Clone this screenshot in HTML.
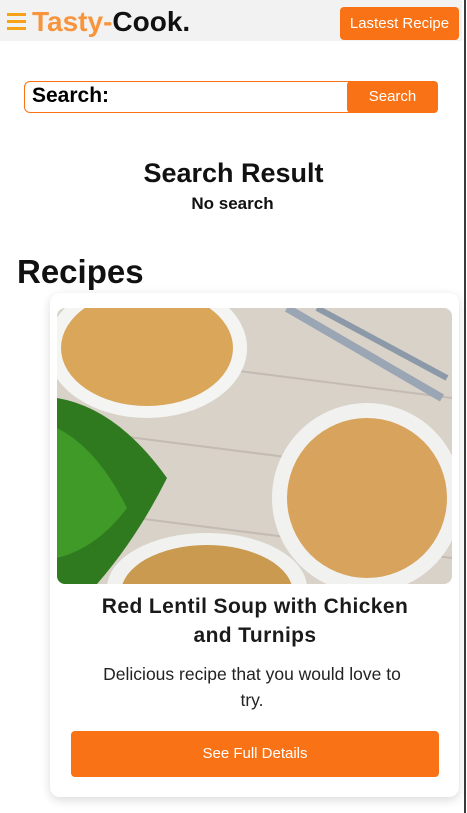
<!DOCTYPE html>
<html><head><style>
body{margin:0;width:467px;height:813px;overflow:hidden;background:#fff;font-family:"Liberation Sans",Arial,sans-serif;position:relative}
.hdr{position:absolute;left:0;top:0;width:462px;height:41px;background:#f2f2f2}
.vl{position:absolute;left:464px;top:0;width:2px;height:813px;background:#3a3a3a}
.menu{position:absolute;left:7px;top:13px;width:19px}
.menu i{display:block;height:3px;background:#f7a21b;margin-bottom:4px}
.logo{position:absolute;left:32px;top:6px;font-size:28px;font-weight:bold;color:#111}
.logo span{color:#f7943c}
.lr{position:absolute;left:340px;top:7px;width:119px;height:33px;background:#f97316;border-radius:4px;color:#fff;font-size:15px;text-align:center;line-height:33px}
.sb{position:absolute;left:24px;top:81px;width:412px;height:30px;border:1px solid #f97316;border-radius:6px}
.sb b{position:absolute;left:7px;top:2px;font-size:21px;color:#000}
.sbtn{position:absolute;left:347px;top:81px;width:91px;height:32px;background:#f97316;border-radius:4px;color:#fff;font-size:15px;text-align:center;line-height:32px}
h2{position:absolute;left:0;width:467px;top:158px;margin:0;text-align:center;font-size:27px;color:#111}
.ns{position:absolute;left:0;width:465px;top:194px;text-align:center;font-weight:bold;font-size:17px;color:#111}
h1{position:absolute;left:17px;top:253px;margin:0;font-size:33px;color:#111}
.card{position:absolute;left:50px;top:293px;width:409px;height:504px;background:#fff;border-radius:10px;box-shadow:0 3px 10px rgba(0,0,0,.15)}
.img{position:absolute;left:57px;top:308px;width:395px;height:276px;border-radius:8px;overflow:hidden}
.t{position:absolute;left:55px;width:400px;top:592px;text-align:center;font-weight:bold;font-size:21px;letter-spacing:0.4px;line-height:29px;color:#1a1a1a}
.d{position:absolute;left:92px;width:320px;top:661px;text-align:center;font-size:17.5px;line-height:26px;color:#222}
.btn{position:absolute;left:71px;top:731px;width:368px;height:46px;background:#f97316;border-radius:4px;color:#fff;text-align:center;line-height:46px;font-size:15px}
</style></head><body>
<div class="hdr"></div><div class="vl"></div>
<div class="menu"><i></i><i></i><i></i></div>
<div class="logo"><span>Tasty-</span>Cook.</div>
<div class="lr">Lastest Recipe</div>
<div class="sb"><b>Search:</b></div>
<div class="sbtn">Search</div>
<h2>Search Result</h2>
<div class="ns">No search</div>
<h1>Recipes</h1>
<div class="card"></div>
<div class="img"><svg width="395" height="276" viewBox="0 0 395 276">
<rect width="395" height="276" fill="#d9d2c9"/>
<g stroke="#c4bcb2" stroke-width="2"><line x1="0" y1="40" x2="395" y2="90"/><line x1="0" y1="120" x2="395" y2="170"/><line x1="0" y1="200" x2="395" y2="250"/></g>
<ellipse cx="90" cy="40" rx="100" ry="70" fill="#f4f4f2"/>
<ellipse cx="90" cy="40" rx="86" ry="58" fill="#d9a65a"/>
<circle cx="310" cy="190" r="95" fill="#f1f1ef"/>
<circle cx="310" cy="190" r="80" fill="#d8a35c"/>
<ellipse cx="150" cy="280" rx="100" ry="55" fill="#f1f1ef"/>
<ellipse cx="150" cy="285" rx="86" ry="48" fill="#c99a50"/>
<path d="M230 0 L385 90" stroke="#9aa6b4" stroke-width="8"/>
<path d="M260 0 L390 70" stroke="#8c99a8" stroke-width="6"/>
<path d="M0 90 Q60 100 110 170 Q80 230 40 276 L0 276Z" fill="#2f7a1e"/>
<path d="M0 120 Q40 140 70 200 Q40 240 0 250Z" fill="#3f9a28"/>
</svg></div>
<div class="t">Red Lentil Soup with Chicken<br>and Turnips</div>
<div class="d">Delicious recipe that you would love to try.</div>
<div class="btn">See Full Details</div>
</body></html>
